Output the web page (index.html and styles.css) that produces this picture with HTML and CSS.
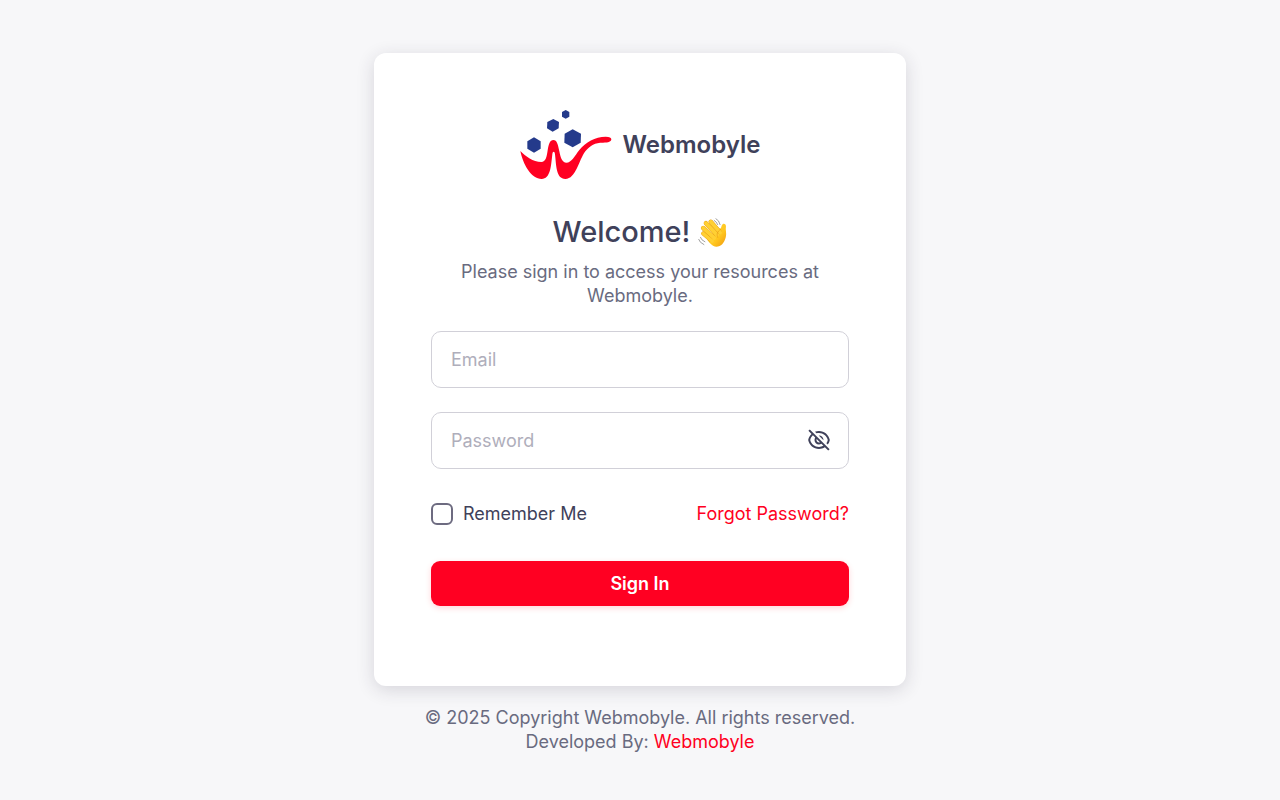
FILE: index.html
```html
<!DOCTYPE html>
<html lang="en">
<head>
    <meta charset="UTF-8">
    <meta name="viewport" content="width=device-width, initial-scale=1.0">
    <title>Login - Webmobyle</title>
    <link rel="stylesheet" href="styles.css">
</head>
<body>
    <main class="card">
        <div class="brand">
            <svg class="brand-logo" viewBox="29 29 276 210" aria-hidden="true">
                <g fill="#243a8b">
                    <path d="M166 29l11 6v14l-11 6-11-6V35z"/>
                    <path d="M129 56l17 9-1 19-18 10-17-10 1-19z"/>
                    <path d="M187 87l25 13-1 27-24 14-25-14 1-27z"/>
                    <path d="M71 111l20 12v22l-20 12-20-12v-22z"/>
                </g>
                <path fill="#ff0022" d="M30 152C46 168 68 185 93 185C106 185 109 171 112 150C115 130 119 119 129 119C140 119 143 133 147 153C151 174 156 187 168 187C184 187 192 168 207 149C226 126 254 109 286 109C298 109 303 112 303 117C303 124 295 127 278 127C254 127 240 134 225 153C205 180 197 236 165 236C137 236 138 196 134 162C133 152 127 152 126 162C122 199 120 236 94 236C63 236 38 192 30 152z"/>
            </svg>
            <span class="brand-name">Webmobyle</span>
        </div>

        <h1 class="title">Welcome!
            <svg class="wave" viewBox="0 0 84 84" role="img" aria-label="waving hand">
                <defs>
                    <linearGradient id="skin" x1="0" y1="0" x2="1" y2="1">
                        <stop offset="0" stop-color="#ffd83a"/>
                        <stop offset="0.6" stop-color="#ffc61f"/>
                        <stop offset="1" stop-color="#f0980f"/>
                    </linearGradient>
                </defs>
                <path fill="url(#skin)" d="M30 56L60 30C66 34 67 28 69 21C72 13 82 16 81 25C79 36 84 45 80 57C76 72 67 83 53 83C42 83 33 72 27 64z"/>
                <g fill="none" stroke-linecap="round">
                    <path stroke="#e79b16" stroke-width="13" d="M37 11L62 40"/>
                    <path stroke="#ffd033" stroke-width="11" d="M37 11L64 42"/>
                    <path stroke="#e79b16" stroke-width="13" d="M23 15L52 46"/>
                    <path stroke="#ffd033" stroke-width="11" d="M23 15L55 49"/>
                    <path stroke="#e79b16" stroke-width="13" d="M15 29L43 55"/>
                    <path stroke="#ffd033" stroke-width="11" d="M15 29L47 58"/>
                    <path stroke="#e79b16" stroke-width="12" d="M15 45L36 63"/>
                    <path stroke="#ffd033" stroke-width="10" d="M15 45L41 67"/>
                    <path stroke="#e79b16" stroke-width="2" d="M65 33c-9 6-12 14-8 23"/>
                    <path stroke="#777" stroke-width="2" d="M52 2q9 4 12 17M47 7q7 4 10 12M2 62q2 9 15 15M7 56q2 8 13 13"/>
                </g>
            </svg>
        </h1>
        <p class="subtitle">Please sign in to access your resources at Webmobyle.</p>

        <form id="loginForm">
            <input class="field" type="email" id="email" name="email" placeholder="Email" aria-label="Email">

            <div class="password">
                <input class="field" type="password" id="password" name="password" placeholder="Password" aria-label="Password">
                <button class="toggle" type="button" aria-label="Show password">
                    <svg viewBox="0 0 24 24" width="24" height="24" fill="currentColor">
                        <path d="M17.8827 19.2968C16.1814 20.3755 14.1638 21.0002 12.0003 21.0002C6.60812 21.0002 2.12215 17.1204 1.18164 12.0002C1.61832 9.62282 2.81932 7.5129 4.52047 5.93457L1.39366 2.80777L2.80788 1.39355L22.6069 21.1925L21.1927 22.6068L17.8827 19.2968ZM5.9356 7.3497C4.60673 8.56015 3.6378 10.1672 3.22278 12.0002C4.14022 16.0521 7.7646 19.0002 12.0003 19.0002C13.5997 19.0002 15.112 18.5798 16.4243 17.8384L14.396 15.8101C13.7023 16.2472 12.8808 16.5002 12.0003 16.5002C9.51498 16.5002 7.50026 14.4854 7.50026 12.0002C7.50026 11.1196 7.75317 10.2981 8.19031 9.60442L5.9356 7.3497ZM12.9139 14.328L9.67246 11.0866C9.5613 11.3696 9.50026 11.6777 9.50026 12.0002C9.50026 13.3809 10.6196 14.5002 12.0003 14.5002C12.3227 14.5002 12.6309 14.4391 12.9139 14.328ZM20.8068 16.5925L19.376 15.1617C20.0319 14.2268 20.5154 13.1586 20.7777 12.0002C19.8603 7.94818 16.2359 5.00016 12.0003 5.00016C11.1544 5.00016 10.3329 5.11773 9.55249 5.33818L7.97446 3.76015C9.22127 3.26959 10.5793 3.00016 12.0003 3.00016C17.3924 3.00016 21.8784 6.87992 22.8189 12.0002C22.5067 13.6998 21.8038 15.2628 20.8068 16.5925ZM11.7229 7.50857C11.8146 7.50299 11.9071 7.50016 12.0003 7.50016C14.4855 7.50016 16.5003 9.51488 16.5003 12.0002C16.5003 12.0933 16.4974 12.1858 16.4919 12.2775L11.7229 7.50857Z"/>
                    </svg>
                </button>
            </div>

            <div class="options">
                <label class="remember" for="remember">
                    <input type="checkbox" id="remember" name="remember">
                    Remember Me
                </label>
                <a href="#">Forgot Password?</a>
            </div>

            <button class="submit" type="submit">Sign In</button>
        </form>
    </main>

    <footer class="footer">
        © 2025 Copyright Webmobyle. All rights reserved.<br>
        Developed By: <a href="#">Webmobyle</a>
    </footer>

    <script>
        const password = document.getElementById("password");

        // show or hide the password
        document.querySelector(".toggle").addEventListener("click", function() {
            password.type = password.type === "password" ? "text" : "password";
        });
    </script>
</body>
</html>
```
FILE: styles.css
```css
* {
    box-sizing: border-box;
}

body {
    display: flex;
    flex-direction: column;
    align-items: center;
    justify-content: center;
    min-height: 100vh;
    margin: 0;
    padding-top: 7px;
    font-family: Inter, sans-serif;
    font-size: 18px;
    line-height: 24px;
    color: #696b80;
    background-color: #f7f7f9;
}

a {
    color: #ff0022;
    text-decoration: none;
}

.card {
    width: 100%;
    max-width: 532px;
    padding: 57px 57px 80px;
    background-color: #fff;
    border-radius: 12px;
    box-shadow: 0 4px 18px rgba(46, 38, 61, 0.16);
}

.brand {
    display: flex;
    align-items: center;
    justify-content: center;
    gap: 11px;
    margin-bottom: 32px;
}

.brand-logo {
    width: 92px;
    height: 70px;
}

.brand-name {
    font-size: 24px;
    font-weight: 600;
    color: #3f415a;
}

.title {
    display: flex;
    align-items: center;
    justify-content: center;
    gap: 8px;
    margin: 0 0 8px;
    font-size: 29px;
    font-weight: 500;
    line-height: 40px;
    color: #3f415a;
}

.wave {
    width: 29px;
    height: 29px;
}

.subtitle {
    margin: 0 0 23px;
    text-align: center;
}

.field {
    display: block;
    width: 100%;
    height: 57px;
    padding: 0 19px;
    border: 1px solid #d1d0d8;
    border-radius: 10px;
    font: inherit;
    color: #3f415a;
    background-color: #fff;
}

.field::placeholder {
    color: #afaebb;
}

.password {
    position: relative;
    margin-top: 24px;
}

.password .field {
    padding-right: 56px;
}

.toggle {
    position: absolute;
    top: 16px;
    right: 18px;
    display: flex;
    padding: 0;
    border: none;
    color: #3f415a;
    background: none;
    cursor: pointer;
}

.options {
    display: flex;
    align-items: center;
    justify-content: space-between;
    margin: 33px 0 35px;
}

.remember {
    display: flex;
    align-items: center;
    gap: 10px;
    color: #3f415a;
}

.remember input {
    appearance: none;
    width: 22px;
    height: 22px;
    margin: 0;
    border: 2px solid #6d6b80;
    border-radius: 6px;
}

.remember input:checked {
    border-color: #ff0022;
    background-color: #ff0022;
}

.submit {
    display: block;
    width: 100%;
    height: 45px;
    border: none;
    border-radius: 9px;
    font: inherit;
    font-weight: 600;
    color: #fff;
    background-color: #ff0022;
    box-shadow: 0 2px 6px rgba(255, 0, 34, 0.16);
    cursor: pointer;
}

.footer {
    margin-top: 20px;
    text-align: center;
}
```
